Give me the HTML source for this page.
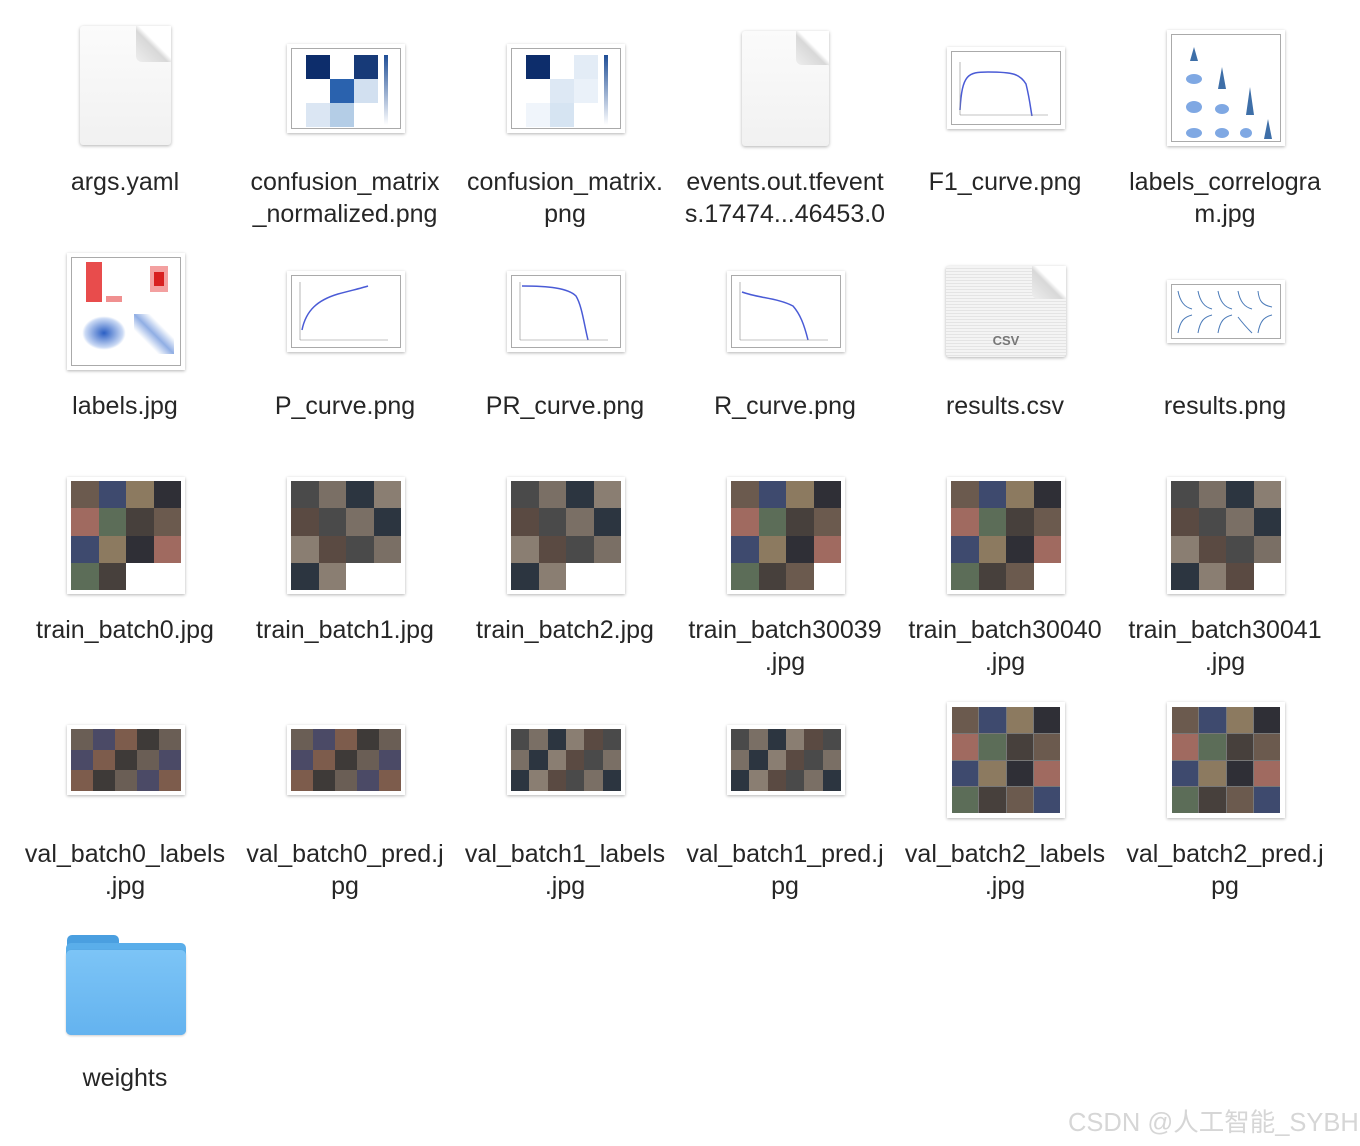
<!DOCTYPE html>
<html><head><meta charset="utf-8"><style>
body{margin:0;width:1360px;height:1146px;background:#fff;position:relative;overflow:hidden;font-family:"Liberation Sans","Noto Sans CJK SC",sans-serif}
.a{position:absolute}
.lbl{position:absolute;width:220px;text-align:center;font-size:25px;line-height:32px;color:#262626;white-space:nowrap}
.th{position:absolute;background:#fff;box-shadow:0 1px 3px rgba(0,0,0,.3);box-sizing:border-box}
.in{position:absolute;border:1px solid #aaa;background:#fff}
.dw{position:absolute;filter:drop-shadow(0 1px 1.5px rgba(0,0,0,.3))}
.doc{position:absolute;left:0;top:0;right:0;bottom:0;background:linear-gradient(#fbfbfb,#f1f1f1);border-radius:3px;clip-path:polygon(0 0,62% 0,100% 30%,100% 100%,0 100%)}
.fold{position:absolute;background:linear-gradient(225deg,#fff 45%,#d8d8d8 55%,#eee);border-radius:0 0 0 6px}
.m{position:absolute;display:grid;gap:0}
.m div{background:#555}
.p1 div:nth-child(7n+1){background:#6b5a4e}.p1 div:nth-child(7n+2){background:#3e4a6e}.p1 div:nth-child(7n+3){background:#8c7a60}.p1 div:nth-child(7n+4){background:#2f2f36}.p1 div:nth-child(7n+5){background:#a06a60}.p1 div:nth-child(7n+6){background:#5c6d58}.p1 div:nth-child(7n){background:#47403c}
.p2 div:nth-child(5n+1){background:#4a4a4a}.p2 div:nth-child(5n+2){background:#7a6f65}.p2 div:nth-child(5n+3){background:#2c3540}.p2 div:nth-child(5n+4){background:#8a7e72}.p2 div:nth-child(5n){background:#5a4a42}
.v div:nth-child(4n+1){background:#6a5e55}.v div:nth-child(4n+2){background:#4b4a66}.v div:nth-child(4n+3){background:#7d5c4c}.v div:nth-child(4n){background:#3e3a38}
.m div.w{background:#fff}
</style></head><body>

<!-- Row 1 -->
<div class="dw" style="left:80px;top:26px;width:91px;height:119px"><div class="doc"></div><div class="fold" style="right:0;top:0;width:35px;height:36px"></div></div>

<div class="th" style="left:287px;top:44px;width:118px;height:89px"><div class="in" style="left:4px;top:4px;width:108px;height:79px">
<div class="a" style="left:14px;top:6px;width:24px;height:24px;background:#0d2d6b"></div>
<div class="a" style="left:62px;top:6px;width:24px;height:24px;background:#173a78"></div>
<div class="a" style="left:38px;top:30px;width:24px;height:24px;background:#2a62ae"></div>
<div class="a" style="left:62px;top:30px;width:24px;height:24px;background:#d2e0f0"></div>
<div class="a" style="left:14px;top:54px;width:24px;height:24px;background:#dbe6f3"></div>
<div class="a" style="left:38px;top:54px;width:24px;height:24px;background:#b4cde6"></div>
<div class="a" style="left:92px;top:6px;width:4px;height:70px;background:linear-gradient(#1f4e96,#fff)"></div></div></div>

<div class="th" style="left:507px;top:44px;width:118px;height:89px"><div class="in" style="left:4px;top:4px;width:108px;height:79px">
<div class="a" style="left:14px;top:6px;width:24px;height:24px;background:#0d2d6b"></div>
<div class="a" style="left:62px;top:6px;width:24px;height:24px;background:#e3ecf6"></div>
<div class="a" style="left:38px;top:30px;width:24px;height:24px;background:#dde8f4"></div>
<div class="a" style="left:62px;top:30px;width:24px;height:24px;background:#eaf1f9"></div>
<div class="a" style="left:14px;top:54px;width:24px;height:24px;background:#f0f5fb"></div>
<div class="a" style="left:38px;top:54px;width:24px;height:24px;background:#d6e4f2"></div>
<div class="a" style="left:92px;top:6px;width:4px;height:70px;background:linear-gradient(#1f4e96,#fff)"></div></div></div>

<div class="dw" style="left:742px;top:31px;width:87px;height:115px"><div class="doc"></div><div class="fold" style="right:0;top:0;width:33px;height:34px"></div></div>

<div class="th" style="left:947px;top:47px;width:118px;height:82px"><div class="in" style="left:4px;top:4px;width:108px;height:72px">
<svg class="a" style="left:6px;top:8px" width="90" height="60"><path d="M2 50 C4 14,10 12,30 12 C55 12,62 14,68 24 C72 40,73 52,74 56" fill="none" stroke="#4a5bd6" stroke-width="1.5"/><path d="M2 55 V2 M2 55 H96" stroke="#888" stroke-width=".6"/></svg></div></div>

<div class="th" style="left:1167px;top:30px;width:118px;height:116px"><div class="in" style="left:4px;top:4px;width:108px;height:106px">
<svg class="a" style="left:4px;top:4px" width="100" height="100"><path d="M14 22 L18 8 L22 22Z M42 50 L46 28 L50 50Z M70 76 L74 48 L78 76Z M88 100 L92 80 L96 100Z" fill="#3e6fa8"/><g fill="#4a84d8" opacity=".7"><ellipse cx="18" cy="40" rx="8" ry="5"/><ellipse cx="18" cy="68" rx="8" ry="6"/><ellipse cx="46" cy="70" rx="7" ry="5"/><ellipse cx="18" cy="94" rx="8" ry="5"/><ellipse cx="46" cy="94" rx="7" ry="5"/><ellipse cx="70" cy="94" rx="6" ry="5"/></g></svg></div></div>

<div class="lbl" style="left:15px;top:166px">args.yaml</div>
<div class="lbl" style="left:235px;top:166px">confusion_matrix<br>_normalized.png</div>
<div class="lbl" style="left:455px;top:166px">confusion_matrix.<br>png</div>
<div class="lbl" style="left:675px;top:166px">events.out.tfevent<br>s.17474...46453.0</div>
<div class="lbl" style="left:895px;top:166px">F1_curve.png</div>
<div class="lbl" style="left:1115px;top:166px">labels_correlogra<br>m.jpg</div>

<!-- Row 2 -->
<div class="th" style="left:67px;top:253px;width:118px;height:117px"><div class="in" style="left:4px;top:4px;width:108px;height:107px">
<div class="a" style="left:14px;top:4px;width:16px;height:40px;background:#e84c4c"></div>
<div class="a" style="left:34px;top:38px;width:16px;height:6px;background:#f09090"></div>
<div class="a" style="left:78px;top:8px;width:18px;height:26px;background:#f3a0a0"></div>
<div class="a" style="left:82px;top:14px;width:10px;height:14px;background:#d82020"></div>
<div class="a" style="left:10px;top:58px;width:44px;height:34px;border-radius:50%;background:radial-gradient(#2b5fc4,rgba(80,130,220,.3) 60%,transparent 70%)"></div>
<div class="a" style="left:62px;top:56px;width:40px;height:40px;background:linear-gradient(225deg,transparent 30%,rgba(70,120,210,.6) 50%,transparent 70%)"></div></div></div>

<div class="th" style="left:287px;top:271px;width:118px;height:81px"><div class="in" style="left:4px;top:4px;width:108px;height:71px">
<svg class="a" style="left:6px;top:4px" width="90" height="62"><path d="M4 50 C8 30,20 20,40 14 C55 10,64 8,70 6" fill="none" stroke="#4a5bd6" stroke-width="1.5"/><path d="M2 60 V2 M2 60 H90" stroke="#888" stroke-width=".6"/></svg></div></div>
<div class="th" style="left:507px;top:271px;width:118px;height:81px"><div class="in" style="left:4px;top:4px;width:108px;height:71px">
<svg class="a" style="left:6px;top:4px" width="90" height="62"><path d="M4 6 C30 6,50 8,58 16 C64 26,66 44,70 60" fill="none" stroke="#4a5bd6" stroke-width="1.5"/><path d="M2 60 V2 M2 60 H90" stroke="#888" stroke-width=".6"/></svg></div></div>
<div class="th" style="left:727px;top:271px;width:118px;height:81px"><div class="in" style="left:4px;top:4px;width:108px;height:71px">
<svg class="a" style="left:6px;top:4px" width="90" height="62"><path d="M4 12 C20 18,40 18,55 26 C62 34,66 44,70 60" fill="none" stroke="#4a5bd6" stroke-width="1.5"/><path d="M2 60 V2 M2 60 H90" stroke="#888" stroke-width=".6"/></svg></div></div>

<div class="dw" style="left:946px;top:266px;width:120px;height:91px"><div class="doc" style="background:repeating-linear-gradient(#f4f4f4 0 2px,#e4e4e4 2px 3px);clip-path:polygon(0 0,72% 0,100% 36%,100% 100%,0 100%)"></div><div class="fold" style="right:0;top:0;width:34px;height:33px"></div></div>
<div class="a" style="left:946px;top:333px;width:120px;text-align:center;font-size:13px;font-weight:bold;color:#777">CSV</div>

<div class="th" style="left:1167px;top:280px;width:118px;height:63px"><div class="in" style="left:4px;top:4px;width:108px;height:53px">
<svg class="a" style="left:2px;top:2px" width="104" height="50"><g fill="none" stroke="#4a7ab8" stroke-width="1"><path d="M4 4 C6 14,10 20,18 22"/><path d="M24 4 C26 14,30 20,38 22"/><path d="M44 4 C46 14,50 20,58 22"/><path d="M64 4 C66 14,70 20,78 22"/><path d="M84 4 C85 14,88 18,98 20"/><path d="M4 46 C6 34,10 30,18 28"/><path d="M24 46 C26 34,30 30,38 28"/><path d="M44 46 C46 34,50 30,58 28"/><path d="M64 30 C70 38,74 42,78 46"/><path d="M84 46 C86 34,90 30,98 28"/></g></svg></div></div>

<div class="lbl" style="left:15px;top:390px">labels.jpg</div>
<div class="lbl" style="left:235px;top:390px">P_curve.png</div>
<div class="lbl" style="left:455px;top:390px">PR_curve.png</div>
<div class="lbl" style="left:675px;top:390px">R_curve.png</div>
<div class="lbl" style="left:895px;top:390px">results.csv</div>
<div class="lbl" style="left:1115px;top:390px">results.png</div>

<!-- Row 3 train -->
<div class="th" style="left:67px;top:477px;width:118px;height:117px"><div class="m p1" style="left:4px;top:4px;width:110px;height:109px;grid-template:repeat(4,1fr)/repeat(4,1fr)"><div></div><div></div><div></div><div></div><div></div><div></div><div></div><div></div><div></div><div></div><div></div><div></div><div></div><div></div><div class="w"></div><div class="w"></div></div></div>
<div class="th" style="left:287px;top:477px;width:118px;height:117px"><div class="m p2" style="left:4px;top:4px;width:110px;height:109px;grid-template:repeat(4,1fr)/repeat(4,1fr)"><div></div><div></div><div></div><div></div><div></div><div></div><div></div><div></div><div></div><div></div><div></div><div></div><div></div><div></div><div class="w"></div><div class="w"></div></div></div>
<div class="th" style="left:507px;top:477px;width:118px;height:117px"><div class="m p2" style="left:4px;top:4px;width:110px;height:109px;grid-template:repeat(4,1fr)/repeat(4,1fr)"><div></div><div></div><div></div><div></div><div></div><div></div><div></div><div></div><div></div><div></div><div></div><div></div><div></div><div></div><div class="w"></div><div class="w"></div></div></div>
<div class="th" style="left:727px;top:477px;width:118px;height:117px"><div class="m p1" style="left:4px;top:4px;width:110px;height:109px;grid-template:repeat(4,1fr)/repeat(4,1fr)"><div></div><div></div><div></div><div></div><div></div><div></div><div></div><div></div><div></div><div></div><div></div><div></div><div></div><div></div><div></div><div class="w"></div></div></div>
<div class="th" style="left:947px;top:477px;width:118px;height:117px"><div class="m p1" style="left:4px;top:4px;width:110px;height:109px;grid-template:repeat(4,1fr)/repeat(4,1fr)"><div></div><div></div><div></div><div></div><div></div><div></div><div></div><div></div><div></div><div></div><div></div><div></div><div></div><div></div><div></div><div class="w"></div></div></div>
<div class="th" style="left:1167px;top:477px;width:118px;height:117px"><div class="m p2" style="left:4px;top:4px;width:110px;height:109px;grid-template:repeat(4,1fr)/repeat(4,1fr)"><div></div><div></div><div></div><div></div><div></div><div></div><div></div><div></div><div></div><div></div><div></div><div></div><div></div><div></div><div></div><div class="w"></div></div></div>

<div class="lbl" style="left:15px;top:614px">train_batch0.jpg</div>
<div class="lbl" style="left:235px;top:614px">train_batch1.jpg</div>
<div class="lbl" style="left:455px;top:614px">train_batch2.jpg</div>
<div class="lbl" style="left:675px;top:614px">train_batch30039<br>.jpg</div>
<div class="lbl" style="left:895px;top:614px">train_batch30040<br>.jpg</div>
<div class="lbl" style="left:1115px;top:614px">train_batch30041<br>.jpg</div>

<!-- Row 4 val -->
<div class="th" style="left:67px;top:725px;width:118px;height:70px"><div class="m v" style="left:4px;top:4px;width:110px;height:62px;grid-template:repeat(3,1fr)/repeat(5,1fr)"><div></div><div></div><div></div><div></div><div></div><div></div><div></div><div></div><div></div><div></div><div></div><div></div><div></div><div></div><div></div></div></div>
<div class="th" style="left:287px;top:725px;width:118px;height:70px"><div class="m v" style="left:4px;top:4px;width:110px;height:62px;grid-template:repeat(3,1fr)/repeat(5,1fr)"><div></div><div></div><div></div><div></div><div></div><div></div><div></div><div></div><div></div><div></div><div></div><div></div><div></div><div></div><div></div></div></div>
<div class="th" style="left:507px;top:725px;width:118px;height:70px"><div class="m p2" style="left:4px;top:4px;width:110px;height:62px;grid-template:repeat(3,1fr)/repeat(6,1fr)"><div></div><div></div><div></div><div></div><div></div><div></div><div></div><div></div><div></div><div></div><div></div><div></div><div></div><div></div><div></div><div></div><div></div><div></div></div></div>
<div class="th" style="left:727px;top:725px;width:118px;height:70px"><div class="m p2" style="left:4px;top:4px;width:110px;height:62px;grid-template:repeat(3,1fr)/repeat(6,1fr)"><div></div><div></div><div></div><div></div><div></div><div></div><div></div><div></div><div></div><div></div><div></div><div></div><div></div><div></div><div></div><div></div><div></div><div></div></div></div>
<div class="th" style="left:947px;top:702px;width:118px;height:116px"><div class="m p1" style="left:5px;top:5px;width:108px;height:106px;grid-template:repeat(4,1fr)/repeat(4,1fr);gap:1px;background:#777"><div></div><div></div><div></div><div></div><div></div><div></div><div></div><div></div><div></div><div></div><div></div><div></div><div></div><div></div><div></div><div></div></div></div>
<div class="th" style="left:1167px;top:702px;width:118px;height:116px"><div class="m p1" style="left:5px;top:5px;width:108px;height:106px;grid-template:repeat(4,1fr)/repeat(4,1fr);gap:1px;background:#777"><div></div><div></div><div></div><div></div><div></div><div></div><div></div><div></div><div></div><div></div><div></div><div></div><div></div><div></div><div></div><div></div></div></div>

<div class="lbl" style="left:15px;top:838px">val_batch0_labels<br>.jpg</div>
<div class="lbl" style="left:235px;top:838px">val_batch0_pred.j<br>pg</div>
<div class="lbl" style="left:455px;top:838px">val_batch1_labels<br>.jpg</div>
<div class="lbl" style="left:675px;top:838px">val_batch1_pred.j<br>pg</div>
<div class="lbl" style="left:895px;top:838px">val_batch2_labels<br>.jpg</div>
<div class="lbl" style="left:1115px;top:838px">val_batch2_pred.j<br>pg</div>

<!-- Row 5 folder -->
<div class="a" style="left:67px;top:935px;width:52px;height:16px;background:#4a9fe0;border-radius:5px 5px 0 0"></div>
<div class="a" style="left:66px;top:943px;width:120px;height:92px;background:#5aaeea;border-radius:5px"></div>
<div class="a" style="left:66px;top:950px;width:120px;height:85px;background:linear-gradient(#7cc4f6,#64b3ef);border-radius:5px;box-shadow:0 1px 2px rgba(0,0,0,.2)"></div>
<div class="lbl" style="left:15px;top:1062px">weights</div>

<div class="a" style="left:1068px;top:1107px;font-size:25.5px;line-height:32px;color:#d6d6d6;white-space:nowrap">CSDN @人工智能_SYBH</div>
</body></html>
